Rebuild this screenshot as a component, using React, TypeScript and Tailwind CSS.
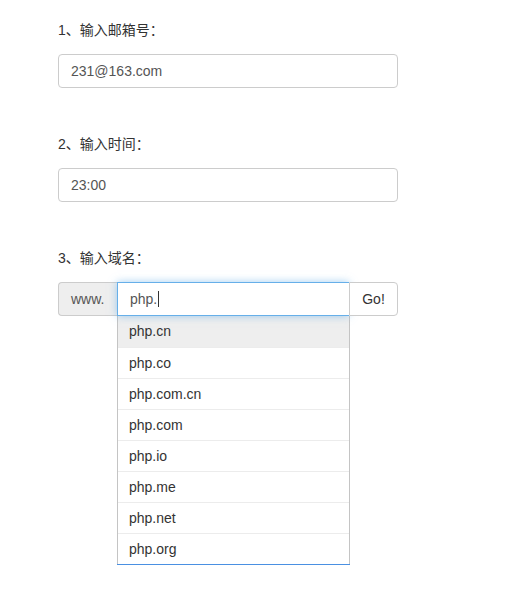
import React from "react";

const items = ["php.cn", "php.co", "php.com.cn", "php.com", "php.io", "php.me", "php.net", "php.org"];

export default function App() {
  return (
    <div
      className="min-h-[604px] w-[526px] bg-white pl-[58px] text-[14px] text-[#333]"
      style={{ fontFamily: '"Liberation Sans", Arial, "Noto Sans CJK SC", sans-serif' }}
    >
      <div className="w-[340px]">
        <div className="pt-[20px]">
          <div className="h-[20px] leading-[20px]">1、输入邮箱号：</div>
          <div className="mt-[14px] flex h-[34px] items-center rounded-[4px] border border-[#ccc] px-[12px] text-[#555]">
            231@163.com
          </div>
        </div>
        <div className="pt-[46px]">
          <div className="h-[20px] leading-[20px]">2、输入时间：</div>
          <div className="mt-[14px] flex h-[34px] items-center rounded-[4px] border border-[#ccc] px-[12px] text-[#555]">
            23:00
          </div>
        </div>
        <div className="pt-[46px]">
          <div className="h-[20px] leading-[20px]">3、输入域名：</div>
          <div className="relative mt-[14px] flex h-[34px]">
            <div className="flex w-[59px] shrink-0 items-center rounded-l-[4px] border border-r-0 border-[#ccc] bg-[#eee] pl-[12px] text-[#555]">
              www.
            </div>
            <div className="relative flex flex-1 items-center border border-r-0 border-[#66afe9] pl-[12px] text-[#555] shadow-[0_0_8px_rgba(102,175,233,0.6)]">
              <span>php.</span>
              <span className="ml-[1px] inline-block h-[16px] w-[1px] bg-[#333]" />
            </div>
            <div className="relative flex w-[49px] shrink-0 items-center justify-center rounded-r-[4px] border border-[#ccc] bg-white text-[#333]">
              Go!
            </div>
          </div>
          <div className="ml-[59px] w-[233px] bg-white">
            <div className="border-x border-[#c4c4c4]">
              {items.map((it, i) => (
                <div
                  key={it}
                  className={
                    "flex h-[31px] items-center pl-[11px] text-[#333] " +
                    (i === 0 ? "bg-[#eee]" : "border-t border-[#ececec]")
                  }
                >
                  {it}
                </div>
              ))}
            </div>
            <div className="h-[1px] bg-[#4a90e2]" />
          </div>
        </div>
      </div>
    </div>
  );
}
